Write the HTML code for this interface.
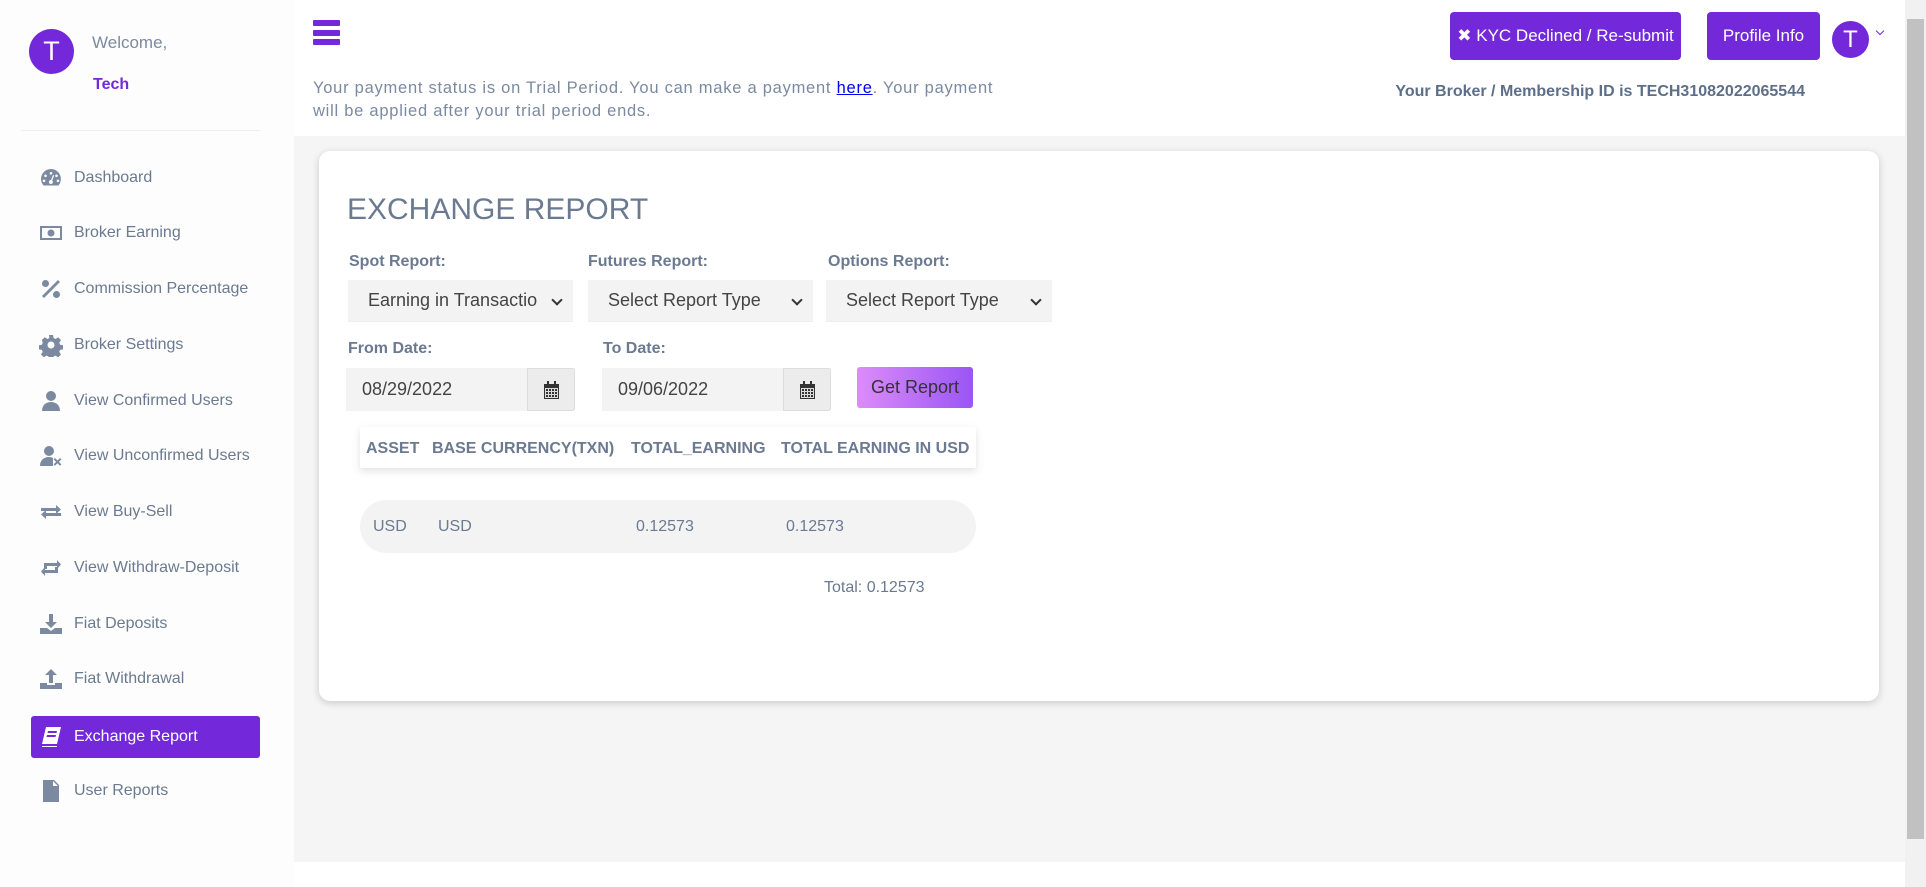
<!DOCTYPE html>
<html><head><meta charset="utf-8"><style>
*{box-sizing:border-box;margin:0;padding:0}
body{width:1926px;height:887px;overflow:hidden;font-family:"Liberation Sans",sans-serif;background:#fff;position:relative;color:#6b7a90}
.abs{position:absolute}
#side{left:0;top:0;width:294px;height:887px;background:#fdfdfd}
.av{border-radius:50%;background:#7329d9;color:#fff;text-align:center;font-size:27px}
.nav{position:absolute;left:31px;width:229px;height:42px;display:flex;align-items:center;font-size:16px;color:#6b7a90}
.nav svg{width:24px;height:24px;margin-left:8px;margin-right:11px;fill:#7b8aa0}
.nav.act{background:#7329d9;color:#fff;border-radius:3px}
.nav.act svg{fill:#fff}
#main{left:294px;top:136px;width:1611px;height:726px;background:#f5f5f5}
.btn{background:#7329d9;color:#fff;border-radius:4px;font-size:17px;display:flex;align-items:center;justify-content:center}
#card{left:319px;top:151px;width:1560px;height:550px;background:#fff;border-radius:11px;box-shadow:0 2px 8px rgba(0,0,0,.18)}
.lbl{font-weight:bold;font-size:16px;color:#6b7a90}
.sel{background:#f3f3f3;height:42px;font-size:18px;color:#444;display:flex;align-items:center;padding-left:20px;border-bottom:1px solid #eee}
.sel:after{content:"";position:absolute;right:12px;top:16px;width:6px;height:6px;border-right:2px solid #333;border-bottom:2px solid #333;transform:rotate(45deg)}
.date{background:#f3f3f3;height:43px;font-size:18px;color:#444;display:flex;align-items:center;padding-left:16px}
.addon{position:absolute;right:0;top:0;width:48px;height:43px;background:#ececec;border:1px solid #ddd;border-radius:0 3px 3px 0;display:flex;align-items:center;justify-content:center}
.th{font-weight:bold;font-size:16px;color:#6b7a90;top:440px}
.td{font-size:16px;color:#6b7a90;top:518px}
</style></head><body>
<div id="side" class="abs">
 <div class="abs av" style="left:29px;top:29px;width:45px;height:45px;line-height:45px">T</div>
 <div class="abs" style="left:92px;top:33px;font-size:17px;color:#7b8aa0">Welcome,</div>
 <div class="abs" style="left:93px;top:76px;font-size:16px;font-weight:bold;color:#7329d9">Tech</div>
 <div class="abs" style="left:21px;top:130px;width:239px;height:1px;background:#eee"></div>
 <div class="nav" style="top:157px"><svg viewBox="0 0 24 24"><path d="M12 3a10 10 0 0 0-10 10c0 2.5 1 4.8 2.5 6.5h15A10 10 0 0 0 12 3zm0 3a1.3 1.3 0 1 1 0 2.6A1.3 1.3 0 0 1 12 6zM6.5 8.5a1.3 1.3 0 1 1 0 2.6 1.3 1.3 0 0 1 0-2.6zm11 0a1.3 1.3 0 1 1 0 2.6 1.3 1.3 0 0 1 0-2.6zM5 13.5a1.3 1.3 0 1 1 0 2.6 1.3 1.3 0 0 1 0-2.6zm14 0a1.3 1.3 0 1 1 0 2.6 1.3 1.3 0 0 1 0-2.6zM14 9l1.2.5-2 5a2 2 0 1 1-1.2-.5z"/></svg>Dashboard</div>
 <div class="nav" style="top:212px"><svg viewBox="0 0 24 24"><path d="M1 5h22v14H1zm2 2v10h18V7zm9 1.5a3.5 3.5 0 1 1 0 7 3.5 3.5 0 0 1 0-7z"/></svg>Broker Earning</div>
 <div class="nav" style="top:268px"><svg viewBox="0 0 24 24"><path d="M19 3l2 2L5 21l-2-2zM6.5 3a3.5 3.5 0 1 1 0 7 3.5 3.5 0 0 1 0-7zm11 11a3.5 3.5 0 1 1 0 7 3.5 3.5 0 0 1 0-7z"/></svg>Commission Percentage</div>
 <div class="nav" style="top:324px"><svg viewBox="0 0 24 24"><path d="M10 2h4l.6 3 2 1 2.6-1.7 2.8 2.8-1.7 2.6.8 2 3 .6v4l-3 .6-.8 2 1.7 2.6-2.8 2.8-2.6-1.7-2 .8-.6 3h-4l-.6-3-2-.8-2.6 1.7-2.8-2.8 1.7-2.6-.8-2-3-.6v-4l3-.6.8-2L2.9 7l2.8-2.8L8.4 6l2-1zm2 6.5a3.5 3.5 0 1 0 0 7 3.5 3.5 0 0 0 0-7z"/></svg>Broker Settings</div>
 <div class="nav" style="top:380px"><svg viewBox="0 0 24 24"><circle cx="12" cy="7" r="5"/><path d="M3 22c0-6 4-9 9-9s9 3 9 9z"/></svg>View Confirmed Users</div>
 <div class="nav" style="top:435px"><svg viewBox="0 0 24 24"><circle cx="10" cy="7" r="5"/><path d="M1 22c0-6 4-9 9-9 2 0 3 .4 4 1v8zM16 14l2.5 2.5L21 14l1.4 1.4-2.5 2.5 2.5 2.5L21 21.8l-2.5-2.5-2.5 2.5-1.4-1.4 2.5-2.5-2.5-2.5z"/></svg>View Unconfirmed Users</div>
 <div class="nav" style="top:491px"><svg viewBox="0 0 24 24"><path d="M2 8h15V5l5 4.5-5 4.5v-3H2zm20 8H7v3l-5-4.5L7 10v3h15z"/></svg>View Buy-Sell</div>
 <div class="nav" style="top:547px"><svg viewBox="0 0 24 24"><path d="M5 7h13v-3l4 4.5-4 4.5v-3H8v3H5zm14 10H6v3l-4-4.5L6 11v3h10v-3h3z"/></svg>View Withdraw-Deposit</div>
 <div class="nav" style="top:603px"><svg viewBox="0 0 24 24"><path d="M10 2h4v8h4l-6 6-6-6h4zM1 16h7l4 3 4-3h7v6H1z"/></svg>Fiat Deposits</div>
 <div class="nav" style="top:658px"><svg viewBox="0 0 24 24"><path d="M10 16h4V8h4l-6-6-6 6h4zM1 16h7v2h8v-2h7v6H1z"/></svg>Fiat Withdrawal</div>
 <div class="nav act" style="top:716px"><svg viewBox="0 0 24 24"><path d="M7 2h15l-4 17H3zm2 4l-.5 2h9l.5-2zm-1 4l-.5 2h9l.5-2zM3 21h15v1H3z"/></svg>Exchange Report</div>
 <div class="nav" style="top:770px"><svg viewBox="0 0 24 24"><path d="M4 1h11l5 5v17H4zm10 1v5h5zM7 11h10v1.5H7zm0 3.5h10V16H7zm0 3.5h10v1.5H7z"/></svg>User Reports</div>
</div>
<div class="abs" style="left:313px;top:20px;width:27px;height:6px;background:#7329d9;border-radius:1px"></div>
<div class="abs" style="left:313px;top:30px;width:27px;height:6px;background:#7329d9;border-radius:1px"></div>
<div class="abs" style="left:313px;top:39px;width:27px;height:6px;background:#7329d9;border-radius:1px"></div>
<div class="abs" style="left:313px;top:77px;font-size:16.5px;letter-spacing:.75px;line-height:23px;color:#7b8aa0;width:760px">Your payment status is on Trial Period. You can make a payment <a style="color:#00e;text-decoration:underline">here</a>. Your payment<br>will be applied after your trial period ends.</div>
<div class="abs btn" style="left:1450px;top:12px;width:231px;height:48px">✖ KYC Declined / Re-submit</div>
<div class="abs btn" style="left:1707px;top:12px;width:113px;height:48px">Profile Info</div>
<div class="abs av" style="left:1832px;top:21px;width:37px;height:37px;line-height:37px;font-size:24px">T</div>
<div class="abs" style="left:1877px;top:28px;width:6px;height:6px;border-right:1.5px solid #7329d9;border-bottom:1.5px solid #7329d9;transform:rotate(45deg)"></div>
<div class="abs" style="right:121px;top:83px;font-size:16px;font-weight:bold;color:#5d6f88">Your Broker / Membership ID is TECH31082022065544</div>
<div class="abs" style="left:1905px;top:0;width:21px;height:887px;background:#f1f1f1"></div>
<div class="abs" style="left:1907px;top:19px;width:17px;height:820px;background:#c1c1c1"></div>
<div id="main" class="abs"></div>
<div id="card" class="abs"></div>
<div class="abs" style="left:347px;top:193px;font-size:30px;color:#6b7a90">EXCHANGE REPORT</div>
<div class="abs lbl" style="left:349px;top:253px">Spot Report:</div>
<div class="abs lbl" style="left:588px;top:253px">Futures Report:</div>
<div class="abs lbl" style="left:828px;top:253px">Options Report:</div>
<div class="abs sel" style="left:348px;top:280px;width:225px"><span style="width:170px;overflow:hidden;white-space:nowrap">Earning in Transaction</span></div>
<div class="abs sel" style="left:588px;top:280px;width:225px">Select Report Type</div>
<div class="abs sel" style="left:826px;top:280px;width:226px">Select Report Type</div>
<div class="abs lbl" style="left:348px;top:340px">From Date:</div>
<div class="abs lbl" style="left:603px;top:340px">To Date:</div>
<div class="abs date" style="left:346px;top:368px;width:229px">08/29/2022<div class="addon"><svg width="15" height="18" viewBox="0 0 15 18" fill="#333"><rect x="0" y="3" width="15" height="15"/><rect x="3" y="0" width="2" height="4"/><rect x="10" y="0" width="2" height="4"/><path d="M1 7h13v10H1z" fill="#ddd"/><path d="M2 8h2v2H2zm3 0h2v2H5zm3 0h2v2H8zm3 0h2v2h-2zM2 11h2v2H2zm3 0h2v2H5zm3 0h2v2H8zm3 0h2v2h-2zM2 14h2v2H2zm3 0h2v2H5zm3 0h2v2H8zm3 0h2v2h-2z"/></svg></div></div>
<div class="abs date" style="left:602px;top:368px;width:229px">09/06/2022<div class="addon"><svg width="15" height="18" viewBox="0 0 15 18" fill="#333"><rect x="0" y="3" width="15" height="15"/><rect x="3" y="0" width="2" height="4"/><rect x="10" y="0" width="2" height="4"/><path d="M1 7h13v10H1z" fill="#ddd"/><path d="M2 8h2v2H2zm3 0h2v2H5zm3 0h2v2H8zm3 0h2v2h-2zM2 11h2v2H2zm3 0h2v2H5zm3 0h2v2H8zm3 0h2v2h-2zM2 14h2v2H2zm3 0h2v2H5zm3 0h2v2H8zm3 0h2v2h-2z"/></svg></div></div>
<div class="abs" style="left:857px;top:367px;width:116px;height:41px;border-radius:3px;background:linear-gradient(90deg,#dc8cf8,#9a55f6);color:#333;font-size:18px;display:flex;align-items:center;justify-content:center">Get Report</div>
<div class="abs" style="left:360px;top:427px;width:616px;height:41px;background:#fff;box-shadow:0 3px 8px rgba(0,0,0,.12)"></div>
<div class="abs th" style="left:366px">ASSET</div>
<div class="abs th" style="left:432px">BASE CURRENCY(TXN)</div>
<div class="abs th" style="left:631px">TOTAL_EARNING</div>
<div class="abs th" style="left:781px">TOTAL EARNING IN USD</div>
<div class="abs" style="left:360px;top:500px;width:616px;height:53px;background:#f3f3f3;border-radius:27px"></div>
<div class="abs td" style="left:373px">USD</div>
<div class="abs td" style="left:438px">USD</div>
<div class="abs td" style="left:636px">0.12573</div>
<div class="abs td" style="left:786px">0.12573</div>
<div class="abs" style="left:824px;top:579px;font-size:16px;color:#6b7a90">Total: 0.12573</div>
</body></html>
